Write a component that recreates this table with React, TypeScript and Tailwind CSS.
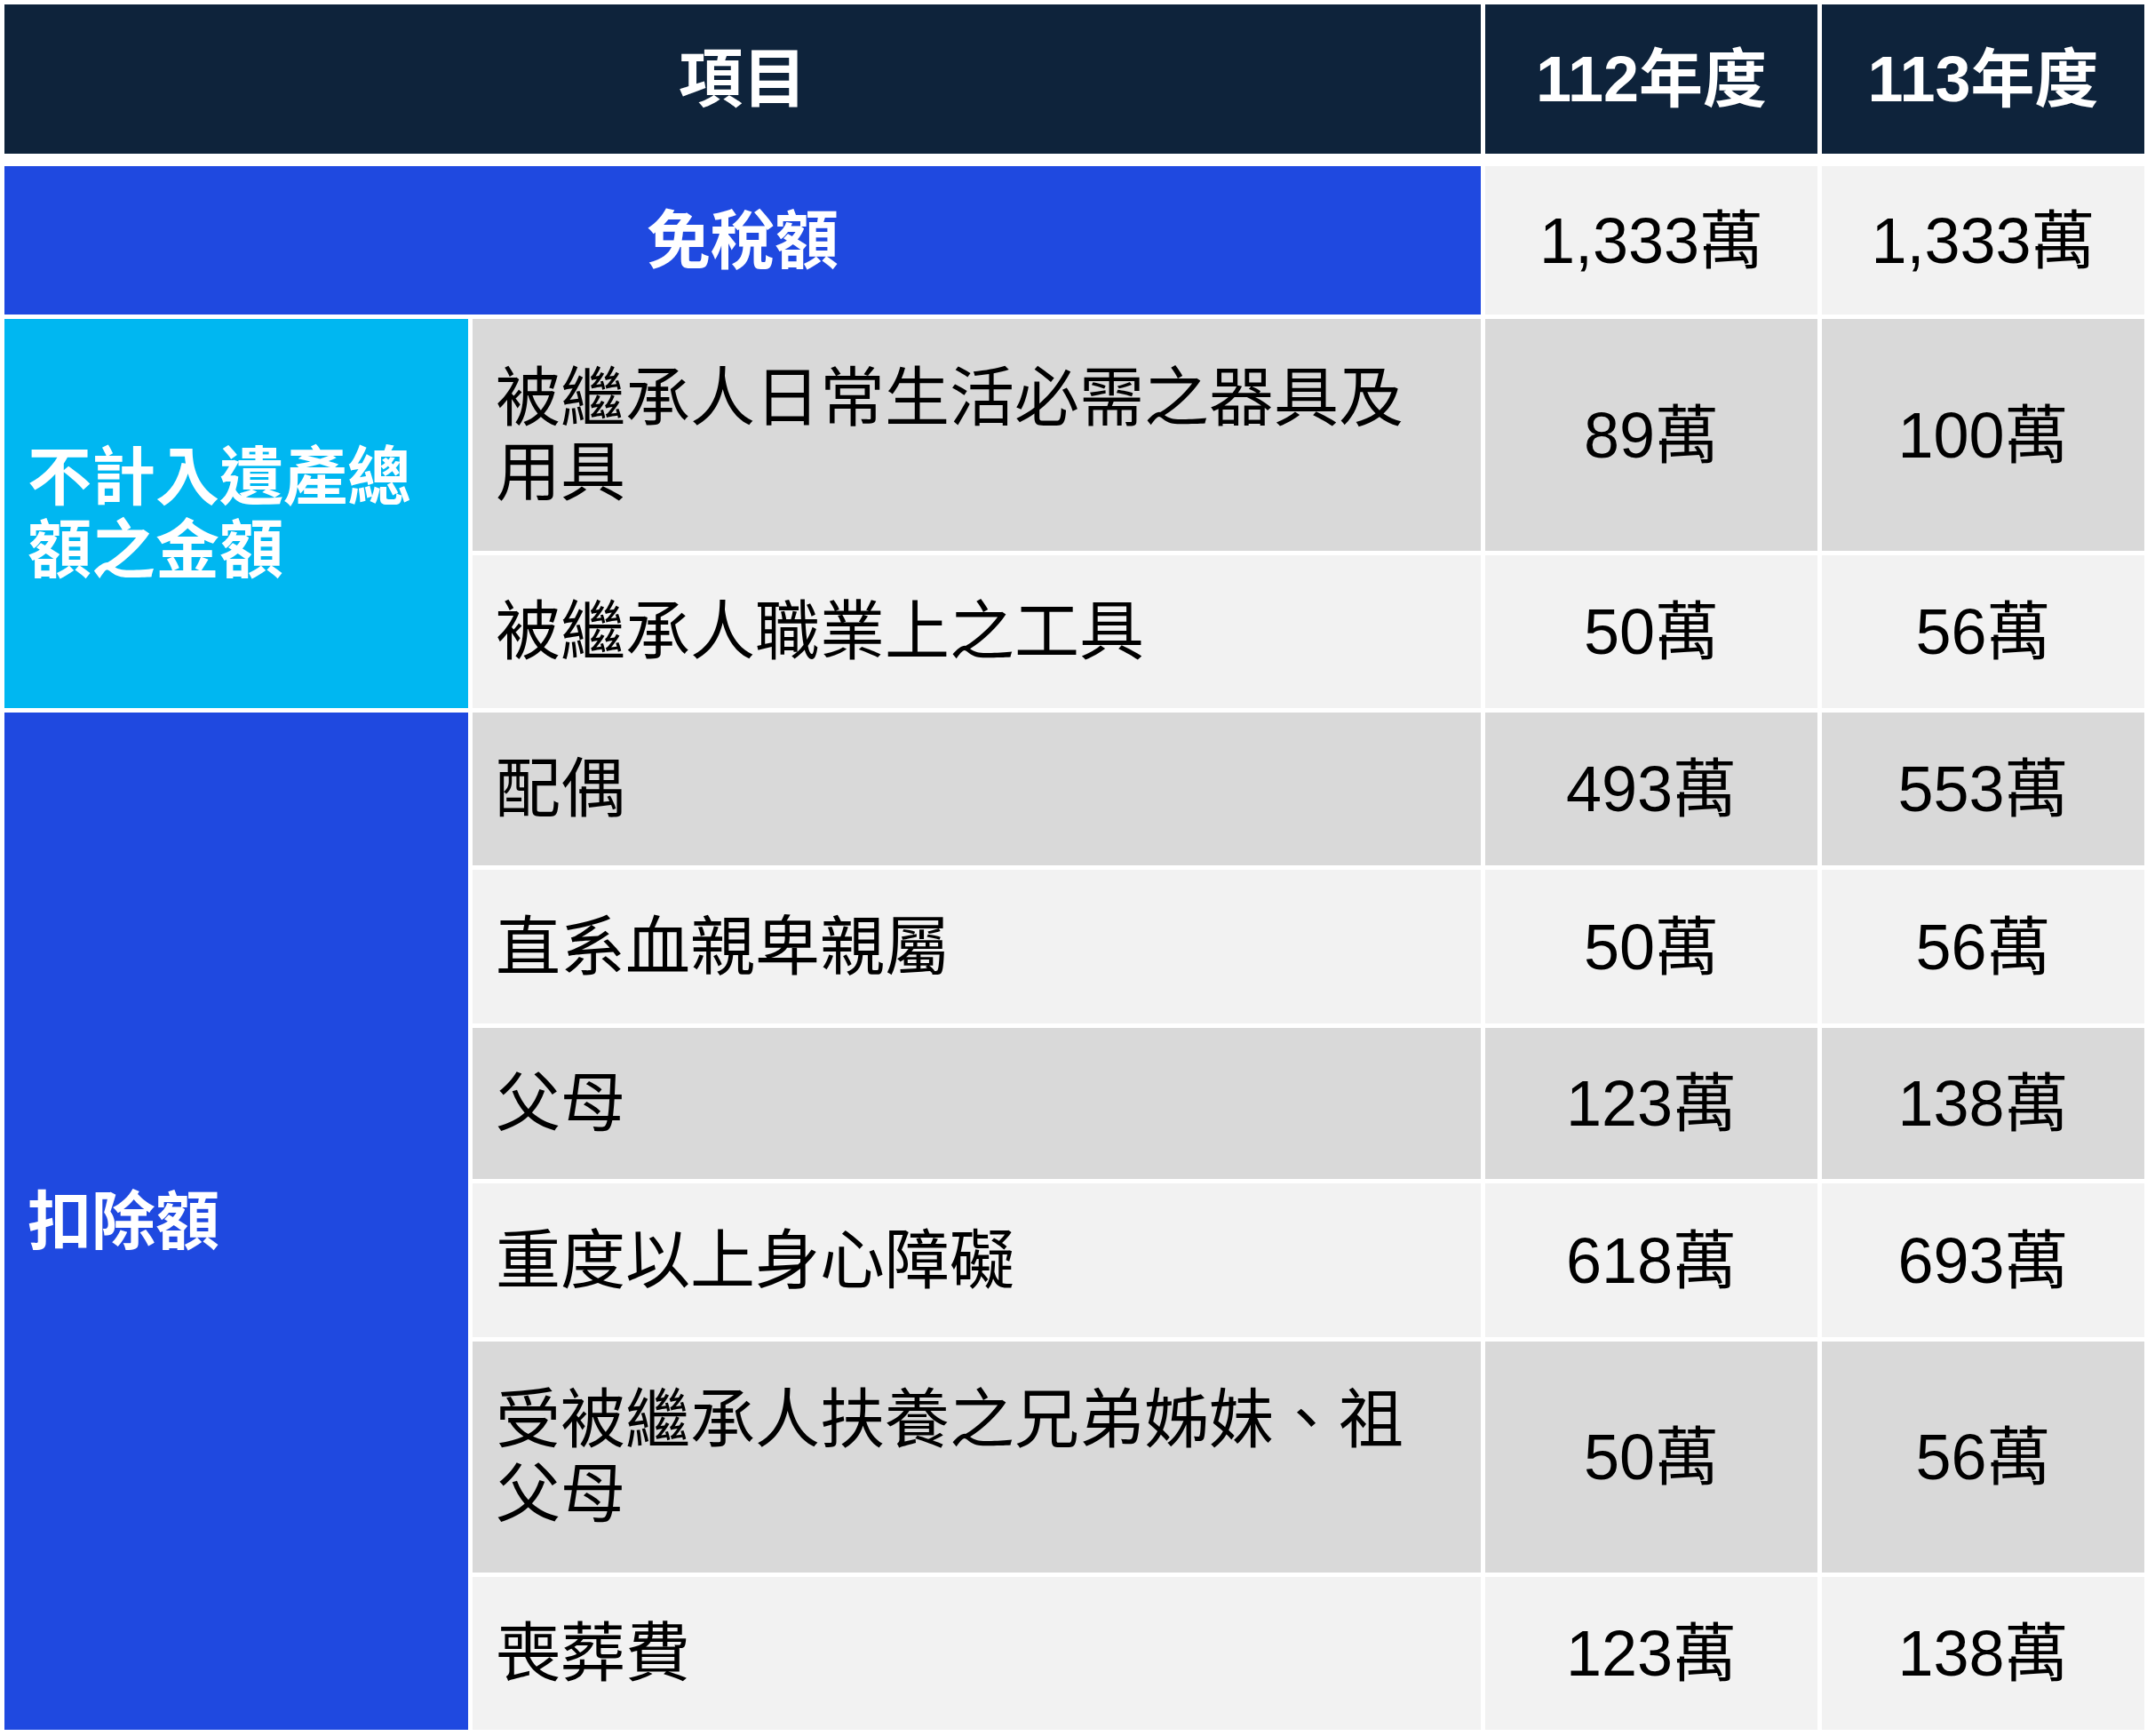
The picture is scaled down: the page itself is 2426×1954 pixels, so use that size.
import React from 'react'

interface Row {
  label: string
  y112: string
  y113: string
  dark: boolean
}

const excluded: Row[] = [
  { label: '被繼承人日常生活必需之器具及用具', y112: '89萬', y113: '100萬', dark: true },
  { label: '被繼承人職業上之工具', y112: '50萬', y113: '56萬', dark: false },
]

const deductions: Row[] = [
  { label: '配偶', y112: '493萬', y113: '553萬', dark: true },
  { label: '直系血親卑親屬', y112: '50萬', y113: '56萬', dark: false },
  { label: '父母', y112: '123萬', y113: '138萬', dark: true },
  { label: '重度以上身心障礙', y112: '618萬', y113: '693萬', dark: false },
  { label: '受被繼承人扶養之兄弟姊妹、祖父母', y112: '50萬', y113: '56萬', dark: true },
  { label: '喪葬費', y112: '123萬', y113: '138萬', dark: false },
]

function Cells({ row }: { row: Row }) {
  const bg = row.dark ? 'bg-[#d9d9d9]' : 'bg-[#f2f2f2]'
  return (
    <>
      <div className={`${bg} flex items-center pl-[26px] pr-[64px] text-[73px] leading-[84px] text-black`}>
        {row.label}
      </div>
      <div className={`${bg} flex items-center justify-center text-[72px] text-black`}>{row.y112}</div>
      <div className={`${bg} flex items-center justify-center text-[72px] text-black`}>{row.y113}</div>
    </>
  )
}

export default function App() {
  return (
    <div className="min-h-screen bg-white pl-[5px] pt-[5px] font-['Liberation_Sans','Noto_Sans_CJK_TC',sans-serif]">
      {/* Header */}
      <div className="grid grid-cols-[522px_1135px_374px_363px] gap-[5px] h-[168px] mb-[14px]">
        <div className="col-span-2 bg-[#0e233b] flex items-center justify-center text-white font-bold text-[72px]">
          項目
        </div>
        <div className="bg-[#0e233b] flex items-center justify-center text-white font-bold text-[72px]">112年度</div>
        <div className="bg-[#0e233b] flex items-center justify-center text-white font-bold text-[72px]">113年度</div>
      </div>

      {/* Body */}
      <div className="grid grid-cols-[522px_1135px_374px_363px] grid-rows-[167px_261px_172px_172px_173px_170px_173px_260px_172px] gap-[5px]">
        <div className="col-span-2 bg-[#1f49e0] flex items-center justify-center text-white font-bold text-[72px]">
          免稅額
        </div>
        <div className="bg-[#f2f2f2] flex items-center justify-center text-[72px] text-black">1,333萬</div>
        <div className="bg-[#f2f2f2] flex items-center justify-center text-[72px] text-black">1,333萬</div>

        <div className="row-span-2 bg-[#00b7f1] flex items-center pl-[26px] text-white font-bold text-[72px] leading-[82px]">
          不計入遺產總額之金額
        </div>
        {excluded.map((r) => (
          <Cells key={r.label} row={r} />
        ))}

        <div className="row-span-6 col-start-1 row-start-4 bg-[#1f49e0] flex items-center pl-[26px] text-white font-bold text-[72px]">
          扣除額
        </div>
        {deductions.map((r) => (
          <Cells key={r.label} row={r} />
        ))}
      </div>
    </div>
  )
}
